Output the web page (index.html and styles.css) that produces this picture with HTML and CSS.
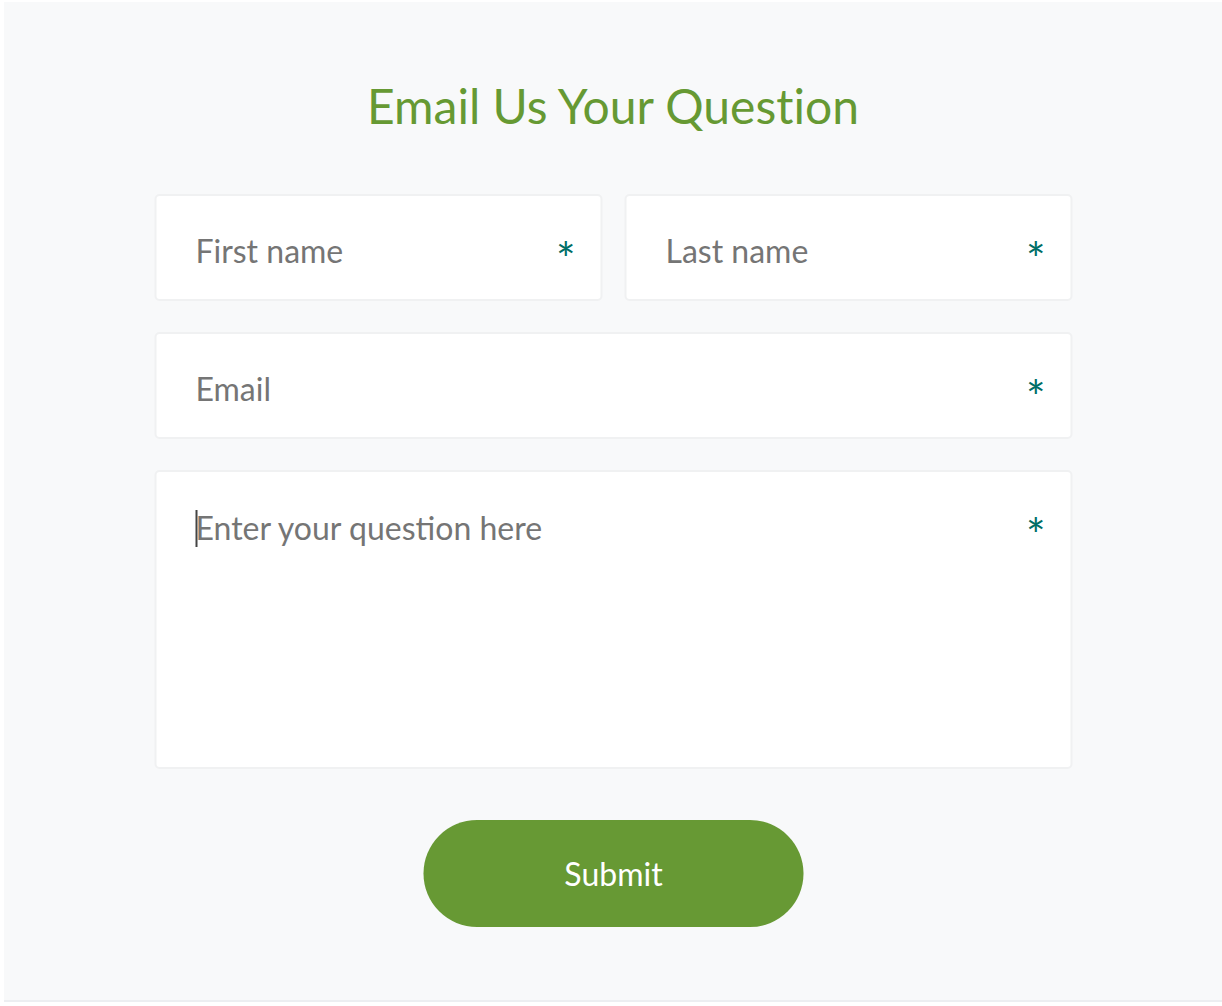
FILE: index.html
```html
<!DOCTYPE html>
<html lang="en">
<head>
    <meta charset="UTF-8">
    <meta name="viewport" content="width=device-width, initial-scale=1.0">
    <title>Email Us Your Question</title>
    <link rel="stylesheet" href="styles.css">
</head>
<body>
    <section class="question-section">
        <h2 class="question-title">Email Us Your Question</h2>
        <form class="question-form">
            <div class="form-row">
                <label class="field">
                    <input type="text" name="first_name" placeholder="First name" required>
                    <span class="required-mark">*</span>
                </label>
                <label class="field">
                    <input type="text" name="last_name" placeholder="Last name" required>
                    <span class="required-mark">*</span>
                </label>
            </div>
            <label class="field">
                <input type="email" name="email" placeholder="Email" required>
                <span class="required-mark">*</span>
            </label>
            <label class="field">
                <textarea name="question" placeholder="Enter your question here" required></textarea>
                <span class="fake-caret"></span>
                <span class="required-mark">*</span>
            </label>
            <div class="form-actions">
                <button type="submit">Submit</button>
            </div>
        </form>
    </section>
</body>
</html>
```

FILE: styles.css
```css
/* Base */
body {
    margin: 0;
    padding: 0;
    background-color: #fff;
    font-family: Lato, "Open Sans", sans-serif;
    font-variant-ligatures: none;
}

.question-section {
    margin: 2px 0 0 4px;
    height: 1000px;
    box-sizing: border-box;
    padding-top: 75px;
    background-color: #f8f9fa;
    border-bottom: 2px solid #eceef1;
}

.question-title {
    margin: 0 0 60px;
    text-align: center;
    font-size: 48px;
    font-weight: 400;
    line-height: normal;
    color: #669933;
}

.question-form {
    width: 918px;
    margin: 0 auto;
    display: flex;
    flex-direction: column;
    gap: 31px;
    transform: translateX(0.5px);
}

.form-row {
    display: grid;
    grid-template-columns: 1fr 1fr;
    gap: 22px;
}

.field {
    position: relative;
    display: block;
}

.field input,
.field textarea {
    display: block;
    width: 100%;
    box-sizing: border-box;
    border: 2px solid #f0f1f2;
    border-radius: 5px;
    background-color: #fff;
    font-family: inherit;
    font-size: 32px;
    color: #333;
    outline: none;
}

.field input {
    height: 107px;
    padding: 5px 60px 0 39px;
}

.field textarea {
    height: 299px;
    padding: 36px 60px 0 39px;
    line-height: normal;
    resize: none;
}

.field input::placeholder,
.field textarea::placeholder {
    color: #757575;
    opacity: 1;
}

.fake-caret {
    position: absolute;
    left: 41px;
    top: 40px;
    width: 2px;
    height: 37px;
    background-color: #444;
}

.required-mark {
    position: absolute;
    top: 42px;
    right: 27px;
    font-size: 46px;
    line-height: 1;
    color: #006e66;
    pointer-events: none;
}

.form-actions {
    display: flex;
    justify-content: center;
    margin-top: 20px;
}

.form-actions button {
    width: 380px;
    height: 107px;
    border: none;
    border-radius: 54px;
    background-color: #679934;
    color: #fff;
    font-family: inherit;
    font-size: 32px;
    cursor: pointer;
}
```
